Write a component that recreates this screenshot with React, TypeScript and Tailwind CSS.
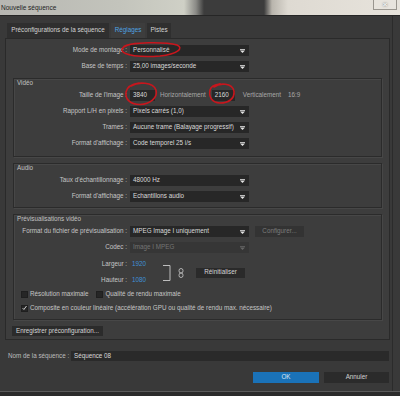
import React from 'react';

const Arrow = ({ dim = false }: { dim?: boolean }) => (
  <svg width="5" height="4" viewBox="0 0 5 4" className="shrink-0">
    <rect x="0" y="0" width="5" height="0.8" fill={dim ? '#666666' : '#e4e4e4'} />
    <polygon points="0,1.5 5,1.5 2.5,4" fill={dim ? '#666666' : '#e4e4e4'} />
  </svg>
);

const Select = ({ value, dim = false }: { value: string; dim?: boolean }) => (
  <div
    className={`w-[119px] h-[11px] flex items-center justify-between pl-[3px] pr-[4px] ${
      dim ? 'bg-[#363636] text-[#747474]' : 'bg-[#272727] text-[#dadada]'
    }`}
  >
    <span className="whitespace-nowrap">{value}</span>
    <Arrow dim={dim} />
  </div>
);

const Row = ({ label, lw, children }: { label: string; lw: string; children: React.ReactNode }) => (
  <div className="flex items-center h-[11px]">
    <div className={`${lw} text-right whitespace-nowrap text-[#c6c6c6] mr-[3px]`}>{label}</div>
    {children}
  </div>
);

const Group = ({ title, children, className = '' }: { title: string; children: React.ReactNode; className?: string }) => (
  <div
    className={`mx-[7px] border border-[#2b2b2b] shadow-[inset_1px_1px_0_#474747,1px_1px_0_#474747] flex flex-col px-[3px] ${className}`}
  >
    <div className="h-[7px] leading-[7px] text-[#c2c2c2] whitespace-nowrap">{title}</div>
    {children}
  </div>
);

const Check = ({ checked = false }: { checked?: boolean }) => (
  <div className="w-[7px] h-[7px] bg-[#262626] border border-[#1f1f1f] flex items-center justify-center shrink-0">
    {checked && (
      <svg width="6" height="6" viewBox="0 0 6 6">
        <path d="M0.8 3.2 L2.3 4.8 L5.4 0.6" fill="none" stroke="#eeeeee" strokeWidth="1" />
      </svg>
    )}
  </div>
);

export default function App() {
  const G = 'w-[110px]';
  return (
    <div className="w-[400px] h-[396px] relative overflow-hidden bg-[#393939] flex flex-col font-['Liberation_Sans',Arial,sans-serif] text-[6.3px] leading-none">
      {/* Title bar */}
      <div className="h-[16px] shrink-0 border-b border-[#262626] bg-[linear-gradient(90deg,#b7b7b2_0%,#c3c4bc_30%,#cfd0c6_46%,#8a8a86_49%,#3c3c3c_51%,#3c3c3c_66%,#b9b5ad_68%,#dedad2_72%,#e7e3dc_100%)] flex items-start justify-between">
        <span className="text-[6.5px] text-[#1e1e1e] pl-[1px] pt-[5px]">Nouvelle séquence</span>
        <div className="w-[24px] h-[10px] mr-[3px] border border-t-0 border-[#9a968f] bg-[#e9e6e0]/60 flex items-center justify-center text-[#f4f4f4] text-[8px] font-bold [text-shadow:0_0_2px_#555]">
          ×
        </div>
      </div>

      <div className="flex-1 flex flex-col mr-[7px] border-r border-[#2b2b2b] pl-[5px] pr-[2px]">
        {/* Tabs */}
        <div className="flex h-[15px] mt-[7px] pl-[2px] gap-[2px] items-end">
          <div className="h-[15px] w-[102px] bg-[#2f2f2f] text-[#d4d4d4] flex items-center justify-center whitespace-nowrap">
            Préconfigurations de la séquence
          </div>
          <div className="h-[15px] w-[34px] bg-[#3d3d3d] text-[#4ea2e2] flex items-center justify-center">
            Réglages
          </div>
          <div className="h-[15px] w-[24px] bg-[#2f2f2f] text-[#d4d4d4] flex items-center justify-center">
            Pistes
          </div>
        </div>

        {/* Panel */}
        <div className="h-[302px] border border-[#2a2a2a] bg-[#3d3d3d] flex flex-col pt-[6px]">
          <div className="flex flex-col gap-[5px]">
            <Row label="Mode de montage :" lw="w-[121px]">
              <Select value="Personnalisé" />
            </Row>
            <Row label="Base de temps :" lw="w-[121px]">
              <Select value="25,00 images/seconde" />
            </Row>
          </div>

          <Group title="Vidéo" className="mt-[6px] pb-[7px]">
            <div className="flex flex-col gap-[5px] mt-[4px]">
              <Row label="Taille de l'image :" lw={G}>
                <div className="w-[25px] h-[11px] bg-[#272727] text-[#dadada] pl-[3px] flex items-center">3840</div>
                <span className="ml-[5px] text-[#a8a8a8] whitespace-nowrap">Horizontalement</span>
                <div className="w-[23px] h-[11px] ml-[6px] bg-[#272727] text-[#dadada] pl-[3px] flex items-center">2160</div>
                <span className="ml-[8px] text-[#a8a8a8]">Verticalement</span>
                <span className="ml-[7px] text-[#a8a8a8]">16:9</span>
              </Row>
              <Row label="Rapport L/H en pixels :" lw={G}>
                <Select value="Pixels carrés (1,0)" />
              </Row>
              <Row label="Trames :" lw={G}>
                <Select value="Aucune trame (Balayage progressif)" />
              </Row>
              <Row label="Format d'affichage :" lw={G}>
                <Select value="Code temporel 25 i/s" />
              </Row>
            </div>
          </Group>

          <Group title="Audio" className="mt-[6px] pb-[5px]">
            <div className="flex flex-col gap-[5px] mt-[4px]">
              <Row label="Taux d'échantillonnage :" lw={G}>
                <Select value="48000 Hz" />
              </Row>
              <Row label="Format d'affichage :" lw={G}>
                <Select value="Echantillons audio" />
              </Row>
            </div>
          </Group>

          <Group title="Prévisualisations vidéo" className="mt-[6px] pb-[6px]">
            <div className="flex flex-col gap-[5px] mt-[4px]">
              <Row label="Format du fichier de prévisualisation :" lw={G}>
                <Select value="MPEG Image I uniquement" />
                <div className="ml-[6px] w-[49px] h-[11px] bg-[#333333] text-[#7c7c7c] flex items-center justify-center">
                  Configurer...
                </div>
              </Row>
              <Row label="Codec :" lw={G}>
                <Select value="Image I MPEG" dim />
              </Row>
            </div>

            <div className="flex items-center mt-[6px]">
              <div className="flex flex-col gap-[5px]">
                <Row label="Largeur :" lw={G}>
                  <span className="w-[30px] pl-[2px] text-[#3f90d6]">1920</span>
                </Row>
                <Row label="Hauteur :" lw={G}>
                  <span className="w-[30px] pl-[2px] text-[#3f90d6]">1080</span>
                </Row>
              </div>
              <svg width="8" height="16" viewBox="0 0 8 16" className="ml-[3px]">
                <path d="M0 0.5 H7 V15.5 H0" fill="none" stroke="#bdbdbd" strokeWidth="1" />
              </svg>
              <svg width="6" height="10" viewBox="0 0 6 10" className="ml-[7px]">
                <rect x="1" y="0.5" width="4" height="4.5" rx="2" fill="none" stroke="#bdbdbd" strokeWidth="0.9" />
                <rect x="1" y="5" width="4" height="4.5" rx="2" fill="none" stroke="#bdbdbd" strokeWidth="0.9" />
              </svg>
              <div className="ml-[12px] w-[49px] h-[10px] bg-[#2a2a2a] text-[#d6d6d6] flex items-center justify-center">
                Réinitialiser
              </div>
            </div>

            <div className="flex items-center h-[10px] mt-[3px] pl-[4px] text-[#c6c6c6]">
              <Check />
              <span className="ml-[2px]">Résolution maximale</span>
              <div className="ml-[8px]">
                <Check />
              </div>
              <span className="ml-[2px]">Qualité de rendu maximale</span>
            </div>
            <div className="flex items-center h-[10px] mt-[4px] pl-[4px] text-[#c6c6c6]">
              <Check checked />
              <span className="ml-[2px] whitespace-nowrap">
                Composite en couleur linéaire (accélération GPU ou qualité de rendu max. nécessaire)
              </span>
            </div>
          </Group>

          <div className="mt-[6px] ml-[6px] w-[91px] h-[10px] bg-[#2b2b2b] text-[#d6d6d6] flex items-center justify-center">
            Enregistrer préconfiguration...
          </div>
        </div>

        {/* Sequence name */}
        <div className="flex items-center mt-[11px] pl-[3px]">
          <span className="w-[60px] text-[#bdbdbd] whitespace-nowrap">Nom de la séquence :</span>
          <div className="ml-[3px] flex-1 h-[10px] bg-[#2a2a2a] text-[#dadada] pl-[3px] mr-[1px] flex items-center">
            Séquence 08
          </div>
        </div>

        {/* Buttons */}
        <div className="flex justify-end mt-[11px] gap-[5px] mr-[1px]">
          <div className="w-[66px] h-[11px] bg-[#1a72b8] text-[#d8e8f4] flex items-center justify-center">OK</div>
          <div className="w-[65px] h-[11px] bg-[#2b2b2b] text-[#d2d2d2] flex items-center justify-center">Annuler</div>
        </div>

        <div className="flex-1" />
      </div>
      <div className="h-[5px] shrink-0 border-t border-[#5a5a5a] bg-[#2b2b2b]" />

      {/* Red hand-drawn marks */}
      <svg width="400" height="396" viewBox="0 0 400 396" className="absolute inset-0 pointer-events-none">
        <g fill="none" stroke="#c8161d" strokeWidth="1.6" strokeLinecap="round">
          <path d="M124 46.5 C131 42, 165 41.5, 177 45 C184 48, 178 54, 160 56 C140 57.5, 124 55.5, 122 50.5 C121 47.5, 127 44.5, 135 43.5" />
          <path d="M131 86 C138 81.5, 153 82, 156 90 C158 98, 150 104, 140 104.5 C130 104.5, 125 99, 126 92 C127 87, 132 84, 139 83" />
          <path d="M214 87 C220 82.5, 232 83, 234 91 C235 99, 228 103, 220 103 C212 102.5, 208.5 97, 210 90 C211 86.5, 215 84.5, 220 84" />
        </g>
      </svg>
    </div>
  );
}
